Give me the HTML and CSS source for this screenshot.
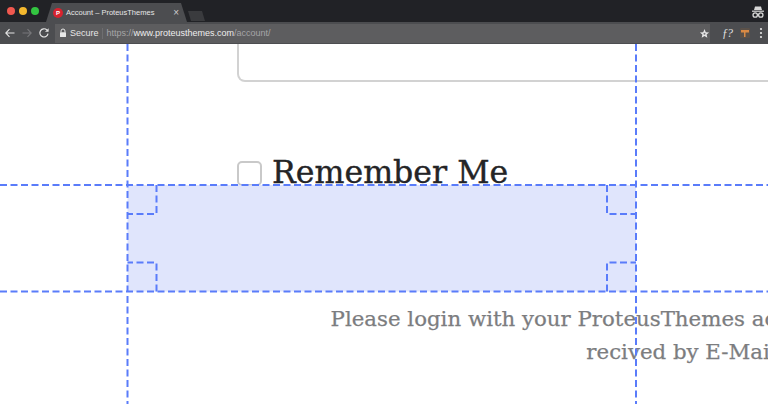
FILE: index.html
```html
<!DOCTYPE html>
<html lang="en">
<head>
    <meta charset="UTF-8">
    <meta name="viewport" content="width=device-width, initial-scale=1.0">
    <title>Account – ProteusThemes</title>
    <link rel="stylesheet" href="styles.css">
</head>
<body>
    <div class="browser">
        <div class="tabstrip">
            <div class="traffic">
                <span class="dot red"></span>
                <span class="dot yellow"></span>
                <span class="dot green"></span>
            </div>
            <div class="tab">
                <span class="favicon">P</span>
                <span class="tab-title">Account – ProteusThemes</span>
                <span class="tab-close">×</span>
            </div>
            <div class="new-tab"></div>
            <svg class="incognito" width="14" height="14" viewBox="0 0 14 14">
                <path d="M4 1.500h6l1 3.500H3z" fill="#d8d8d8"/>
                <rect x="1" y="5.600" width="12" height="1.200" fill="#d8d8d8"/>
                <circle cx="4.200" cy="10" r="2.200" fill="none" stroke="#d8d8d8" stroke-width="1.300"/>
                <circle cx="9.800" cy="10" r="2.200" fill="none" stroke="#d8d8d8" stroke-width="1.300"/>
            </svg>
        </div>
        <div class="toolbar">
            <svg class="nav-icon" width="12" height="12" viewBox="0 0 12 12">
                <path d="M10.500 6H2M5.500 2.200 1.800 6l3.700 3.800" fill="none" stroke="#e4e4e4" stroke-width="1.100"/>
            </svg>
            <svg class="nav-icon" width="12" height="12" viewBox="0 0 12 12">
                <path d="M1.500 6H10M6.500 2.200 10.200 6 6.500 9.800" fill="none" stroke="#77777a" stroke-width="1.100"/>
            </svg>
            <svg class="nav-icon" width="12" height="12" viewBox="0 0 12 12">
                <path d="M10 6.600A4.100 4.100 0 1 1 8.900 3" fill="none" stroke="#e4e4e4" stroke-width="1.200"/>
                <path d="M10.600 1.200v3.600H7z" fill="#e4e4e4"/>
            </svg>
            <div class="omnibox">
                <svg class="lock" width="8" height="10" viewBox="0 0 8 10">
                    <path d="M2 4.500V3a2 2 0 0 1 4 0v1.500" fill="none" stroke="#e8e8e8" stroke-width="1"/>
                    <rect x="1" y="4.200" width="6" height="4.800" rx=".6" fill="#e8e8e8"/>
                </svg>
                <span class="secure">Secure</span>
                <span class="divider"></span>
                <span class="url">https://<b>www.proteusthemes.com</b>/account/</span>
                <svg class="star" width="11" height="11" viewBox="0 0 12 12">
                    <path d="M6 1.200 7.400 4.500 11 4.800 8.300 7.100 9.100 10.600 6 8.800 2.900 10.600 3.700 7.100 1 4.800 4.600 4.500z" fill="#e8e8e8"/>
                    <circle cx="6" cy="6.200" r="1.100" fill="#77777a"/>
                </svg>
            </div>
            <div class="extensions">
                <span class="ext-fx">ƒ?</span>
                <svg width="12" height="12" viewBox="0 0 12 12">
                    <rect x="1" y="1" width="10" height="10" rx="1" fill="#5b5149"/>
                    <path d="M2 3h8v2.500H6.500V10H5V5.500H2z" fill="#d98a45"/>
                </svg>
                <svg class="menu-dots" width="4" height="12" viewBox="0 0 4 12">
                    <circle cx="2" cy="2" r="1.100" fill="#e4e4e4"/>
                    <circle cx="2" cy="6" r="1.100" fill="#e4e4e4"/>
                    <circle cx="2" cy="10" r="1.100" fill="#e4e4e4"/>
                </svg>
            </div>
        </div>
    </div>

    <main class="page">
        <div class="login-form">
            <div class="text-input"></div>
            <label class="remember">
                <span class="checkbox"></span>
                <span class="remember-label">Remember Me</span>
            </label>
            <p class="login-note">Please login with your ProteusThemes account details which you<br>recived by E-Mail</p>
        </div>

        <!-- layout guides over the page -->
        <svg class="guides" width="768" height="360" viewBox="0 0 768 360">
            <path class="guide-fill" d="M127.500 141H636V247.500H127.500z"/>
            <path class="guide-line" d="M127.500 0V360M636 0V360M0 141H768M0 247.500H768"/>
            <path class="guide-line" d="M156.500 141V170H127.500M156.500 247.500V218.500H127.500M607 141V170H636M607 247.500V218.500H636"/>
        </svg>
    </main>
</body>
</html>
```

FILE: styles.css
```css
html, body {
    margin: 0;
    padding: 0;
    height: 100%;
    overflow: hidden;
    background: #fff;
}
.browser {
    font-family: 'Liberation Sans', sans-serif;
    color: #e6e6e6;
}
.tabstrip {
    height: 22px;
    display: flex;
    align-items: flex-end;
    background: #212226;
}
.traffic {
    display: flex;
    gap: 4px;
    padding: 0 0 7px 7px;
    width: 39px;
}
.dot {
    width: 8px;
    height: 8px;
    border-radius: 50%;
}
.red { background: #f0584f; }
.yellow { background: #f4b82e; }
.green { background: #33c541; }
.tab {
    width: 141px;
    height: 19px;
    box-sizing: border-box;
    display: flex;
    align-items: center;
    padding: 0 8px 0 7px;
    background: #4c4d50;
    clip-path: polygon(0 100%, 6px 0, 135px 0, 100% 100%);
    font-size: 7.500px;
}
.favicon {
    width: 10px;
    height: 10px;
    margin: 0 3px 0 0;
    border-radius: 50%;
    background: #d8232f;
    color: #fff;
    font-size: 6px;
    font-weight: bold;
    line-height: 10px;
    text-align: center;
}
.tab-title {
    flex: 1;
    white-space: nowrap;
}
.tab-close {
    font-size: 10px;
    color: #ccc;
}
.new-tab {
    width: 17px;
    height: 10px;
    margin: 0 0 1px 1px;
    background: #3a3b3e;
    clip-path: polygon(0 0, 14px 0, 100% 100%, 3px 100%);
}
.incognito {
    margin: 0 3px 3px auto;
}
.toolbar {
    height: 22px;
    display: flex;
    align-items: center;
    padding: 0 5px 0 4px;
    background: #4c4d50;
}
.nav-icon {
    margin-right: 5px;
    flex: none;
}
.omnibox {
    flex: 1;
    height: 19px;
    display: flex;
    align-items: center;
    padding: 0 0 0 4px;
    background: #5d5d5f;
    font-size: 9px;
}
.lock {
    margin-right: 3px;
}
.secure {
    white-space: nowrap;
}
.divider {
    width: 1px;
    height: 11px;
    margin: 0 3.500px;
    background: #6e6e70;
}
.url {
    color: #a5a5a7;
    white-space: nowrap;
    font-size: 9px;
}
.url b {
    color: #eee;
    font-weight: normal;
}
.star {
    margin-left: auto;
}
.extensions {
    width: 53px;
    display: flex;
    align-items: center;
    justify-content: flex-end;
    gap: 7px;
}
.ext-fx {
    font-family: 'Liberation Serif', serif;
    font-style: italic;
    font-size: 12px;
    letter-spacing: -1px;
    color: #ddd;
}
.menu-dots {
    margin-left: 1px;
}
.page {
    position: relative;
    height: 360px;
    overflow: hidden;
    font-family: 'DejaVu Serif', serif;
}
.login-form {
    width: 889px;
    margin-left: 237px;
}
.text-input {
    height: 38px;
    box-sizing: border-box;
    border: 2px solid #d2d2d2;
    border-top: 0;
    border-radius: 0 0 8px 8px;
}
.remember {
    display: flex;
    align-items: center;
    gap: 10px;
    margin-top: 68px;
    height: 44px;
}
.checkbox {
    width: 25px;
    height: 25px;
    box-sizing: border-box;
    border: 2px solid #c9c9c9;
    border-radius: 5px;
    margin-top: 2px;
}
.remember-label {
    font-size: 31.600px;
    color: #242426;
    white-space: nowrap;
    -webkit-text-stroke: 0.4px #242426;
}
.login-note {
    margin: 108px 0 0;
    text-align: center;
    font-size: 21.300px;
    line-height: 33px;
    color: #7c7d7f;
    white-space: nowrap;
    -webkit-text-stroke: 0.25px #7c7d7f;
}
.guides {
    position: absolute;
    left: 0;
    top: 0;
}
.guide-fill {
    fill: #dbe1fb;
    fill-opacity: 0.85;
}
.guide-line {
    fill: none;
    stroke: #5a7cfa;
    stroke-width: 2;
    stroke-dasharray: 7 3.500;
}
```
